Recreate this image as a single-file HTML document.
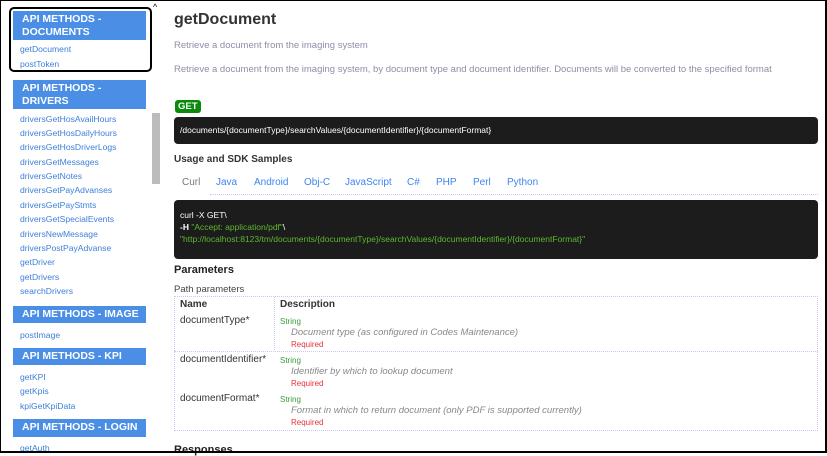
<!DOCTYPE html>
<html><head><style>
*{margin:0;padding:0;box-sizing:border-box}
body{width:827px;height:453px;overflow:hidden;background:#fff;font-family:"Liberation Sans",Arial,sans-serif;position:relative}
.frame{position:absolute;left:0;top:0;width:827px;height:453px;border:1px solid #000;border-bottom-width:2px;border-right-width:2px;z-index:5;pointer-events:none}
.a{position:absolute;white-space:nowrap}
.h{position:absolute;left:13px;width:133px;background:#4a8ee6;color:#fff;font-weight:bold;font-size:10.5px;line-height:12.5px;padding:2px 9px;white-space:nowrap}
.l{position:absolute;left:20px;color:#3d7fd9;font-size:8.6px}
.m{font-size:9.5px;color:#8e8ea8}
.dark{position:absolute;left:174px;width:644px;background:#1c1c1c;border-radius:4px}
.tab{position:absolute;top:177px;color:#3d86f0;font-size:10px}
.nm{position:absolute;left:180px;font-size:10px;color:#333}
.st{position:absolute;left:280px;font-size:8px;color:#3a9a3a}
.ds{position:absolute;left:291px;font-size:9.5px;color:#888;font-style:italic}
.rq{position:absolute;left:291px;font-size:8px;color:#e8323a}
.hl{position:absolute;left:174px;width:644px;border-top:1px dotted #c8c8ee}
</style></head><body>
<div class="frame"></div>
<div class="a" style="left:9px;top:7px;width:143px;height:65px;border:2px solid #000;border-radius:5px"></div>
<div class="a" style="left:153px;top:2px;font-size:9px">^</div>
<div class="a" style="left:152px;top:113px;width:8px;height:71px;background:#bcbcbc"></div>
<div class="h" style="top:11px;height:29px">API METHODS -<br>DOCUMENTS</div>
<div class="l" style="top:44px">getDocument</div>
<div class="l" style="top:59px">postToken</div>
<div class="h" style="top:80px;height:29px">API METHODS -<br>DRIVERS</div>
<div class="l" style="top:114px">driversGetHosAvailHours</div>
<div class="l" style="top:128px">driversGetHosDailyHours</div>
<div class="l" style="top:142px">driversGetHosDriverLogs</div>
<div class="l" style="top:157px">driversGetMessages</div>
<div class="l" style="top:171px">driversGetNotes</div>
<div class="l" style="top:185px">driversGetPayAdvanses</div>
<div class="l" style="top:200px">driversGetPayStmts</div>
<div class="l" style="top:214px">driversGetSpecialEvents</div>
<div class="l" style="top:229px">driversNewMessage</div>
<div class="l" style="top:243px">driversPostPayAdvanse</div>
<div class="l" style="top:257px">getDriver</div>
<div class="l" style="top:272px">getDrivers</div>
<div class="l" style="top:286px">searchDrivers</div>
<div class="h" style="top:306px;height:17px">API METHODS - IMAGE</div>
<div class="l" style="top:330px">postImage</div>
<div class="h" style="top:348px;height:17px">API METHODS - KPI</div>
<div class="l" style="top:372px">getKPI</div>
<div class="l" style="top:386px">getKpis</div>
<div class="l" style="top:401px">kpiGetKpiData</div>
<div class="h" style="top:419px;height:18px">API METHODS - LOGIN</div>
<div class="l" style="top:443px">getAuth</div>

<div class="a" style="left:174px;top:11px;font-size:16px;font-weight:bold;color:#333">getDocument</div>
<div class="a m" style="left:174px;top:40px">Retrieve a document from the imaging system</div>
<div class="a m" style="left:174px;top:64px">Retrieve a document from the imaging system, by document type and document identifier. Documents will be converted to the specified format</div>
<div class="a" style="left:175px;top:100px;background:#0a8a0a;color:#fff;font-weight:bold;font-size:9.5px;padding:1px 3px;border-radius:3px">GET</div>
<div class="dark" style="top:117px;height:27px"></div>
<div class="a" style="left:180px;top:125px;color:#fff;font-size:8.5px">/documents/{documentType}/searchValues/{documentIdentifier}/{documentFormat}</div>
<div class="a" style="left:174px;top:154px;font-size:10px;font-weight:bold;color:#333">Usage and SDK Samples</div>
<div class="tab" style="left:182px;color:#777">Curl</div>
<div class="tab" style="left:216px">Java</div>
<div class="tab" style="left:254px">Android</div>
<div class="tab" style="left:304px">Obj-C</div>
<div class="tab" style="left:345px">JavaScript</div>
<div class="tab" style="left:407px">C#</div>
<div class="tab" style="left:436px">PHP</div>
<div class="tab" style="left:473px">Perl</div>
<div class="tab" style="left:507px">Python</div>
<div class="hl" style="top:194px;left:210px;width:608px"></div>
<div class="dark" style="top:200px;height:59px"></div>
<div class="a" style="left:180px;top:209px;color:#fff;font-size:8.5px;line-height:12px">curl -X GET\<br><b>-H</b> <span style="color:#5fb82f">"Accept: application/pdf"</span>\<br><span style="color:#5fb82f">"http://localhost:8123/tm/documents/{documentType}/searchValues/{documentIdentifier}/{documentFormat}"</span></div>
<div class="a" style="left:174px;top:264px;font-size:11px;font-weight:bold;color:#222">Parameters</div>
<div class="a" style="left:174px;top:284px;font-size:9.5px;color:#444">Path parameters</div>
<div class="a" style="left:174px;top:296px;width:644px;height:135px;border:1px dotted #c8c8ee"></div>
<div class="a" style="left:274px;top:297px;height:53px;border-left:1px dotted #c8c8ee"></div>
<div class="a" style="left:180px;top:299px;font-size:10px;font-weight:bold;color:#333">Name</div>
<div class="a" style="left:280px;top:299px;font-size:10px;font-weight:bold;color:#333">Description</div>
<div class="nm" style="top:315px">documentType*</div>
<div class="st" style="top:317px">String</div>
<div class="ds" style="top:327px">Document type (as configured in Codes Maintenance)</div>
<div class="rq" style="top:340px">Required</div>
<div class="hl" style="top:351px"></div>
<div class="nm" style="top:354px">documentIdentifier*</div>
<div class="st" style="top:356px">String</div>
<div class="ds" style="top:366px">Identifier by which to lookup document</div>
<div class="rq" style="top:379px">Required</div>
<div class="nm" style="top:393px">documentFormat*</div>
<div class="st" style="top:395px">String</div>
<div class="ds" style="top:405px">Format in which to return document (only PDF is supported currently)</div>
<div class="rq" style="top:418px">Required</div>
<div class="a" style="left:174px;top:444px;font-size:11px;font-weight:bold;color:#222">Responses</div>
</body></html>
